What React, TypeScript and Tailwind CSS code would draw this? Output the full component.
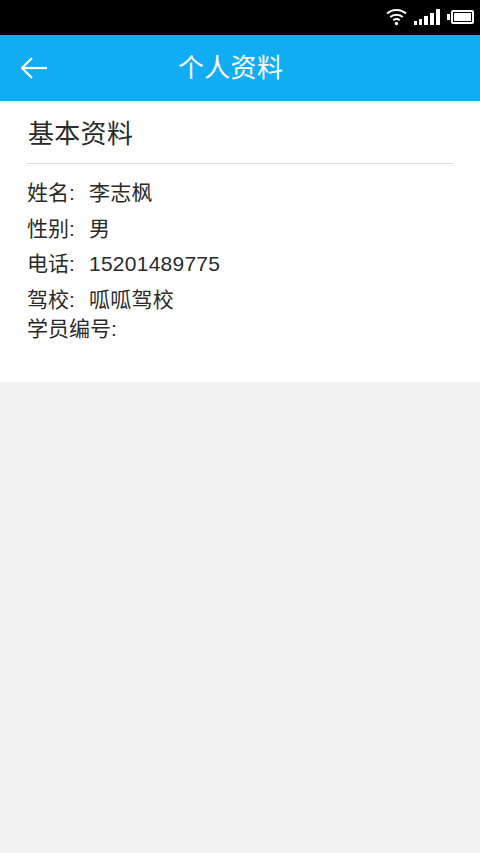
const FONT = "font-['Liberation_Sans','Noto_Sans_CJK_SC',sans-serif]";

function WifiIcon() {
  return (
    <svg width="21" height="18" viewBox="0 0 21 18" fill="none" stroke="white" strokeWidth="2">
      <path d="M1 5.5C6.2 0.7 14.8 0.7 20 5.5" />
      <path d="M4.2 9C7.8 5.9 13.2 5.9 16.8 9" />
      <path d="M7.2 12.2C9.1 10.8 11.9 10.8 13.8 12.2" />
      <circle cx="10.5" cy="15.5" r="1.7" fill="white" stroke="none" />
    </svg>
  );
}

function SignalIcon() {
  return (
    <div className="flex items-end gap-[2px] h-[16px]">
      <div className="w-[3px] h-[4px] bg-white" />
      <div className="w-[3px] h-[6px] bg-white" />
      <div className="w-[4px] h-[9px] bg-white" />
      <div className="w-[4px] h-[12px] bg-white" />
      <div className="w-[4px] h-[16px] bg-white" />
    </div>
  );
}

function BatteryIcon() {
  return (
    <div className="flex items-center gap-[1px]">
      <div className="w-[3px] h-[6px] bg-white" />
      <div className="w-[23px] h-[14px] border-2 border-white rounded-[2px] p-[1px]">
        <div className="w-full h-full bg-white" />
      </div>
    </div>
  );
}

function Row({ label, value, className }: { label: string; value?: string; className?: string }) {
  return (
    <div className={`flex text-[21px] leading-[28px] text-[#2a2a2a] ${className ?? ""}`}>
      <span className="w-[62px] shrink-0 whitespace-nowrap">{label}</span>
      {value && <span className="tracking-[0.25px]">{value}</span>}
    </div>
  );
}

export default function App() {
  return (
    <div className={`${FONT} h-[853px] w-[480px] bg-[#f1f1f1] flex flex-col overflow-hidden`}>
      <div className="h-[35px] bg-black flex items-center justify-end gap-[7px] pr-[6px] pb-[2px]">
        <WifiIcon />
        <SignalIcon />
        <BatteryIcon />
      </div>

      <div className="h-[66px] bg-[#10adf5] flex items-center pl-[20px]">
        <svg width="27" height="22" viewBox="0 0 27 22" fill="none" stroke="white" strokeWidth="2.2">
          <path d="M27 11H2" />
          <path d="M12 1L2 11L12 21" />
        </svg>
        <span className="ml-[131px] text-[26px] tracking-[0.3px] text-white">个人资料</span>
      </div>

      <div className="h-[281px] bg-white px-[27px]">
        <div className="h-[63px] border-b border-[#dcdcdc] flex items-center pt-[4px] pl-[1px] text-[26px] tracking-[0.3px] text-[#2a2a2a]">
          基本资料
        </div>
        <div className="pt-[15px]">
          <Row label="姓名:" value="李志枫" />
          <Row label="性别:" value="男" className="mt-[8px]" />
          <Row label="电话:" value="15201489775" className="mt-[7px]" />
          <Row label="驾校:" value="呱呱驾校" className="mt-[8px]" />
          <Row label="学员编号:" className="mt-[1px]" />
        </div>
      </div>
    </div>
  );
}
